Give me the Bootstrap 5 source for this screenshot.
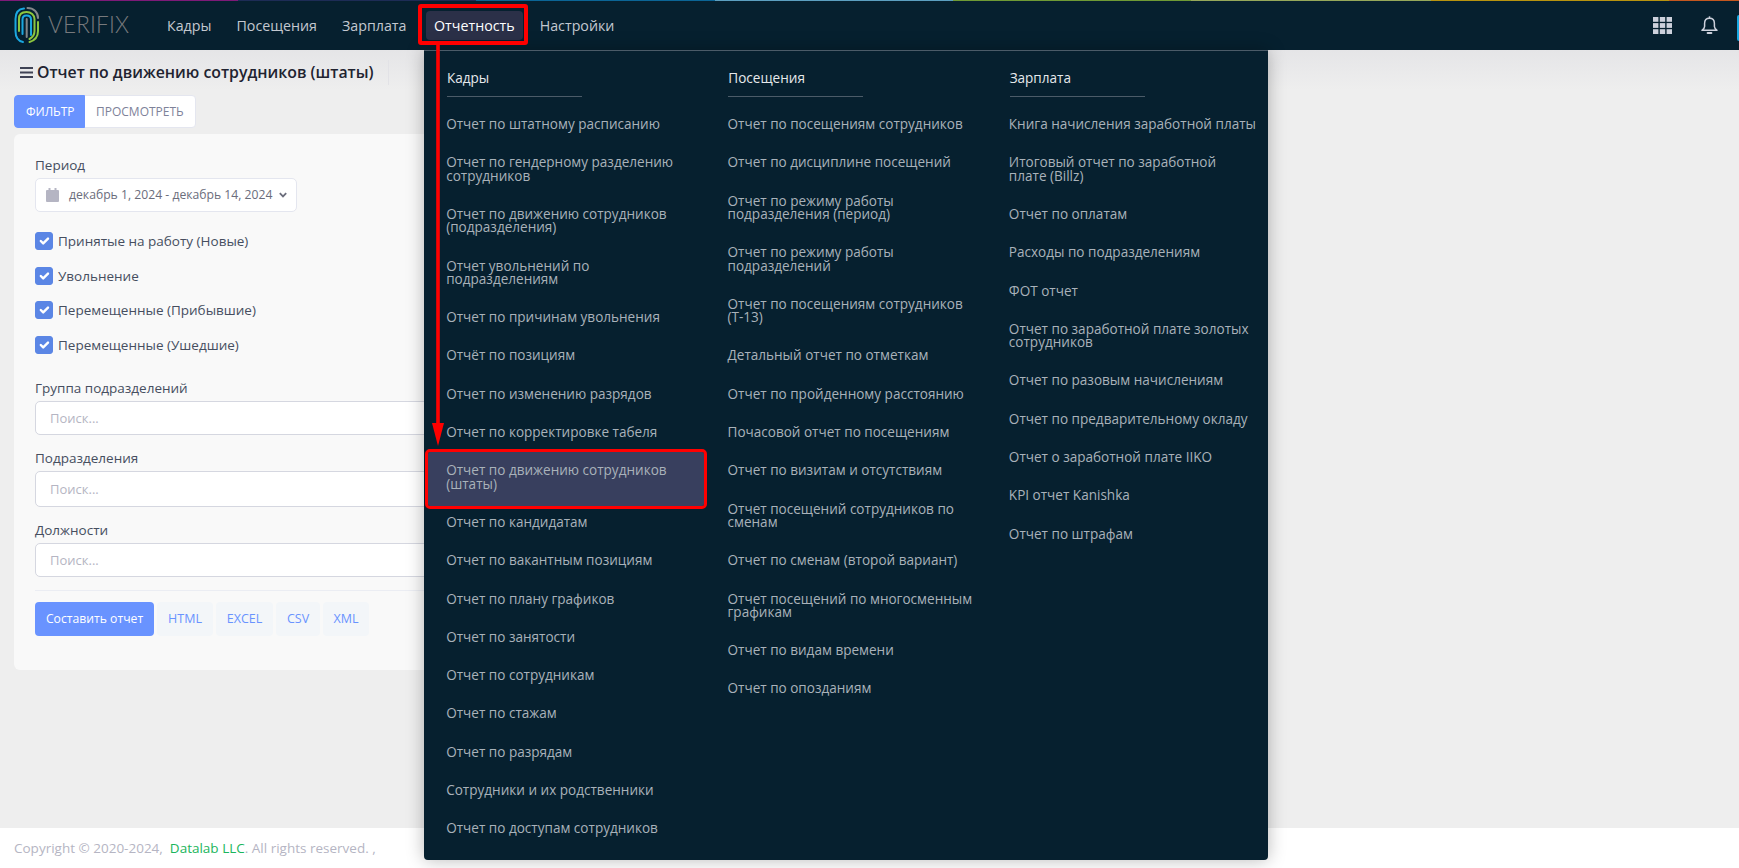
<!DOCTYPE html>
<html lang="ru">
  <head>
    <meta charset="UTF-8" />
    <meta name="viewport" content="width=device-width, initial-scale=1.0" />
    <title>Отчет по движению сотрудников (штаты)</title>
    <link href="https://cdn.jsdelivr.net/npm/bootstrap@5.3.0/dist/css/bootstrap.min.css" rel="stylesheet" />
    <style>
      body { font-family: "Open Sans", "Liberation Sans", sans-serif; font-size: 13.5px; background: #eeeeee; color: #3f4254; }
      .top-stripe { height: 1px; background: linear-gradient(90deg, #7d1a78 0 13.7%, #1d2c56 13.7% 27.4%, #0b6596 27.4% 41.1%, #5c9fc0 41.1% 54.8%, #6f9a35 54.8% 68.5%, #96a85a 68.5% 82.3%, #b8930f 82.3% 96%, #c4571f 96%); }
      .app-header { height: 50px; background: #06202f; }
      .logo-box { margin-left: 14px; width: 145px; }
      .logo-word { font-family: "Lato", sans-serif; font-weight: 300; font-size: 22.5px; color: #77797c; letter-spacing: .2px; margin-left: 8px; line-height: 1; }
      .app-header .nav-link { color: #c3c8d0; font-size: 14.25px; padding: 5px 9px; height: 29px; line-height: 19px; border-radius: 4px; margin-right: 9px; }
      .app-header .nav-link.active { color: #fff; background: #2b3048; font-weight: 500; margin-left: 2.5px; }
      .head-icons { gap: 29px; padding-right: 21px; }
      .avatar-edge { position: absolute; right: 0; top: 15px; width: 2px; height: 26px; background: #19a7e0; border-radius: 2px 0 0 2px; }
      .page-main { background: linear-gradient(#e5e5e7, #eeeeee 40px); padding: 0 14px; }
      .title-row { height: 45px; padding-left: 6px; }
      .title-text { font-size: 15.85px; font-weight: 600; color: #212330; padding-right: 14px; border-right: 1px solid #e2e2e6; line-height: 25px; }
      .tab-group .btn { font-size: 12px; height: 33px; padding: 0 11px; border-radius: 4px; text-transform: uppercase; border: 1px solid #e4e6ef; background: #fff; color: #7e8299; }
      .tab-group .btn.active { background: #6993ff; border-color: #6993ff; color: #fff; width: 71px; font-weight: 500; }
      .filter-card { width: 900px; height: 536px; margin-top: 6px; background: #f9f9f9; border: 0; border-radius: 6px; padding: 21px; }
      .field-label { font-size: 13.5px; line-height: 20px; margin-bottom: 3px; color: #464e5f; }
      .date-btn { width: 262px; height: 34px; background: #fff; border: 1px solid #e4e6ef; border-radius: 5px; padding: 0 10px; font-size: 12.2px; color: #6b6d7c; gap: 10px; }
      .date-caret { margin-left: -4px; }
      .check-list { margin-top: 20px; gap: 16.7px; margin-bottom: 24px; }
      .check-list .form-check { padding: 0; margin: 0; min-height: 18px; line-height: 18px; }
      .check-list .form-check-input { float: none; width: 18px; height: 18px; margin: 0 5px 0 0; border-radius: 3px; background-color: #5b86e5; border-color: #5b86e5; vertical-align: top; }
      .check-list .form-check-label { color: #464e5f; }
      .search-input { height: 34px; border: 1px solid #d5d7e0; border-radius: 5px; padding: 0 14px; font-size: 13px; margin-bottom: 13px; }
      .search-input.tall { height: 36px; }
      .search-input::placeholder { color: #b5b5c3; }
      .card-rule { margin: 13px 0 11px; border-top: 1px solid #ebedf3; opacity: 1; }
      .action-row { gap: 3px; }
      .action-row .btn { height: 34px; padding: 0; font-size: 12.5px; border: 0; border-radius: 4px; }
      .action-row .btn-make { width: 119px; background: #6993ff; color: #fff; font-size: 12.2px; }
      .btn-export { background: #f3f6f9; color: #6993ff; }
      .page-foot { height: 40px; flex: 0 0 40px; background: #fff; padding-left: 14px; color: #b5b5c3; font-size: 13.5px; line-height: 40px; }
      .page-foot a { color: #1bb55c; text-decoration: none; }
      .reports-menu { display: block; position: absolute; left: 424px; top: 50px; width: 844px; height: 810px; margin: 0; padding: 0; background: #06202f; border: 0; border-top: 1px solid #4b5b68; border-radius: 0 0 4px 4px; box-shadow: 0 0 18px rgba(0, 0, 0, .28); z-index: 20; }
      .menu-col { width: 281.33px; }
      .menu-head { margin: 0 0 8.6px 23px; padding-top: 18px; height: 46px; width: 135px; border-bottom: 1px solid #4b5b68; color: #e6e9ec; font-size: 13.55px; font-weight: 500; line-height: 18px; }
      .rep-item { display: block; margin: 0 1px 0 4px; padding: 12.5px 10.5px 12.5px 18.2px; color: #a9b2ba; font-size: 13.55px; line-height: 13.3px; text-decoration: none; border-radius: 2px; }
      .rep-item.picked { background: #383f5e; outline: 3.5px solid #f00; padding-bottom: 15px; margin-bottom: -2.5px; position: relative; z-index: 1; }
      .nav-mark { position: absolute; left: 418px; top: 4px; width: 110px; height: 41px; border: 4px solid #f00; border-radius: 3px; z-index: 30; }
      .nav-arrow { position: absolute; left: 430px; top: 45px; z-index: 30; }
    </style>
  </head>
  <body class="d-flex flex-column vh-100 overflow-hidden position-relative">
    <header class="app-header navbar navbar-expand p-0 position-relative flex-nowrap align-items-center">
      <div class="top-stripe position-absolute top-0 start-0 w-100"></div>
      <a class="logo-box d-flex align-items-center text-decoration-none" href="#">
        <svg class="flex-shrink-0" width="26" height="37" viewBox="0 0 26 37" fill="none" stroke-width="2" stroke-linecap="round">
          <path d="M10 1.5C4 2 1.5 6 1.5 12V24C1.5 30 4 34 9 35" stroke="#1aa7e0" />
          <path d="M13.5 1C19.5 1 24 5 24 11" stroke="#85878a" />
          <path d="M24 15V24C24 30 20.5 33.5 15.5 35" stroke="#8cc63f" />
          <path d="M5 24V12C5 7 8 5 12.5 5C17 5 20.5 8 20.5 12V24C20.5 28 18.5 30.5 15.5 32" stroke="#8cc63f" />
          <path d="M8.5 27V12.5C8.5 10 10 8.5 12.5 8.5C15 8.5 17 10 17 12.5V28" stroke="#1aa7e0" />
          <path d="M12.7 12V30" stroke="#85878a" />
        </svg>
        <span class="logo-word">VERIFIX</span>
      </a>
      <ul class="navbar-nav align-items-center">
        <li class="nav-item"><a class="nav-link" href="#">Кадры</a></li>
        <li class="nav-item"><a class="nav-link" href="#">Посещения</a></li>
        <li class="nav-item"><a class="nav-link" href="#">Зарплата</a></li>
        <li class="nav-item"><a class="nav-link active" href="#">Отчетность</a></li>
        <li class="nav-item"><a class="nav-link" href="#">Настройки</a></li>
      </ul>
      <div class="head-icons d-flex align-items-center ms-auto">
        <svg width="19" height="17" viewBox="0 0 19 17" fill="#cdd1dc">
          <rect x="0" y="0" width="5.4" height="4.8" /><rect x="6.8" y="0" width="5.4" height="4.8" /><rect x="13.6" y="0" width="5.4" height="4.8" />
          <rect x="0" y="6.1" width="5.4" height="4.8" /><rect x="6.8" y="6.1" width="5.4" height="4.8" /><rect x="13.6" y="6.1" width="5.4" height="4.8" />
          <rect x="0" y="12.2" width="5.4" height="4.8" /><rect x="6.8" y="12.2" width="5.4" height="4.8" /><rect x="13.6" y="12.2" width="5.4" height="4.8" />
        </svg>
        <svg width="17" height="19" viewBox="0 0 17 19" fill="none" stroke="#cdd1dc" stroke-width="1.5" stroke-linejoin="round">
          <path d="M8.5 2.2C5.4 2.2 3.6 4.4 3.6 7.3V10.5C3.6 12 2.6 13 1 14.3H16C14.4 13 13.4 12 13.4 10.5V7.3C13.4 4.4 11.6 2.2 8.5 2.2Z" />
          <path d="M8.5 .3V2" />
          <path d="M6.6 16.9H10.4" stroke-width="2" stroke-linecap="round" />
        </svg>
      </div>
      <span class="avatar-edge"></span>
    </header>

    <main class="page-main flex-grow-1">
      <div class="title-row d-flex align-items-center">
        <svg class="me-1 flex-shrink-0" width="13" height="11" viewBox="0 0 13 11" fill="#3f4254"><rect width="13" height="2" /><rect y="4.5" width="13" height="2" /><rect y="9" width="13" height="2" /></svg>
        <span class="title-text">Отчет по движению сотрудников (штаты)</span>
      </div>
      <div class="tab-group btn-group mt-0">
        <button class="btn active" type="button">Фильтр</button>
        <button class="btn" type="button">Просмотреть</button>
      </div>
      <form class="filter-card card">
        <label class="field-label">Период</label>
        <button class="date-btn d-flex align-items-center" type="button">
          <svg class="flex-shrink-0" width="13" height="14" viewBox="0 0 13 14" fill="#b5b5c3"><rect x="0" y="2" width="13" height="12" rx="1" /><rect x="2.5" y="0" width="2" height="3" /><rect x="8.5" y="0" width="2" height="3" /></svg>
          <span class="text-nowrap">декабрь 1, 2024 - декабрь 14, 2024</span>
          <svg class="date-caret flex-shrink-0" width="8" height="6" viewBox="0 0 8 6" fill="none" stroke="#6b6d7c" stroke-width="1.8"><path d="M.8 1.2 4 4.4 7.2 1.2" /></svg>
        </button>
        <div class="check-list d-flex flex-column">
          <div class="form-check"><input class="form-check-input" type="checkbox" id="chkNew" checked /><label class="form-check-label" for="chkNew">Принятые на работу (Новые)</label></div>
          <div class="form-check"><input class="form-check-input" type="checkbox" id="chkFired" checked /><label class="form-check-label" for="chkFired">Увольнение</label></div>
          <div class="form-check"><input class="form-check-input" type="checkbox" id="chkIn" checked /><label class="form-check-label" for="chkIn">Перемещенные (Прибывшие)</label></div>
          <div class="form-check"><input class="form-check-input" type="checkbox" id="chkOut" checked /><label class="form-check-label" for="chkOut">Перемещенные (Ушедшие)</label></div>
        </div>
        <label class="field-label">Группа подразделений</label>
        <input class="form-control search-input" placeholder="Поиск..." />
        <label class="field-label">Подразделения</label>
        <input class="form-control search-input tall" placeholder="Поиск..." />
        <label class="field-label">Должности</label>
        <input class="form-control search-input mb-0" placeholder="Поиск..." />
        <hr class="card-rule" />
        <div class="action-row d-flex">
          <button class="btn btn-make" type="button">Составить отчет</button>
          <button class="btn btn-export" style="width: 56px" type="button">HTML</button>
          <button class="btn btn-export" style="width: 57px" type="button">EXCEL</button>
          <button class="btn btn-export" style="width: 44px" type="button">CSV</button>
          <button class="btn btn-export" style="width: 46px" type="button">XML</button>
        </div>
      </form>
    </main>

    <footer class="page-foot">Copyright © 2020-2024, &nbsp;<a href="#">Datalab LLC</a>. All rights reserved. ,</footer>

    <div class="reports-menu dropdown-menu show" id="reportsMenu"></div>
    <div class="nav-mark"></div>
    <svg class="nav-arrow" width="16" height="402" viewBox="0 0 16 402" fill="#f00">
      <rect x="6.2" y="0" width="3.6" height="380" />
      <polygon points="2,378 14,378 8,401" />
    </svg>

    <script>
      const columns = [
        {
          title: "Кадры",
          items: [
            "Отчет по штатному расписанию",
            "Отчет по гендерному разделению сотрудников",
            "Отчет по движению сотрудников (подразделения)",
            "Отчет увольнений по подразделениям",
            "Отчет по причинам увольнения",
            "Отчёт по позициям",
            "Отчет по изменению разрядов",
            "Отчет по корректировке табеля",
            "Отчет по движению сотрудников (штаты)",
            "Отчет по кандидатам",
            "Отчет по вакантным позициям",
            "Отчет по плану графиков",
            "Отчет по занятости",
            "Отчет по сотрудникам",
            "Отчет по стажам",
            "Отчет по разрядам",
            "Сотрудники и их родственники",
            "Отчет по доступам сотрудников",
          ],
        },
        {
          title: "Посещения",
          items: [
            "Отчет по посещениям сотрудников",
            "Отчет по дисциплине посещений",
            "Отчет по режиму работы подразделения (период)",
            "Отчет по режиму работы подразделений",
            "Отчет по посещениям сотрудников (Т-13)",
            "Детальный отчет по отметкам",
            "Отчет по пройденному расстоянию",
            "Почасовой отчет по посещениям",
            "Отчет по визитам и отсутствиям",
            "Отчет посещений сотрудников по сменам",
            "Отчет по сменам (второй вариант)",
            "Отчет посещений по многосменным графикам",
            "Отчет по видам времени",
            "Отчет по опозданиям",
          ],
        },
        {
          title: "Зарплата",
          items: [
            "Книга начисления заработной платы",
            "Итоговый отчет по заработной плате (Billz)",
            "Отчет по оплатам",
            "Расходы по подразделениям",
            "ФОТ отчет",
            "Отчет по заработной плате золотых сотрудников",
            "Отчет по разовым начислениям",
            "Отчет по предварительному окладу",
            "Отчет о заработной плате IIKO",
            "KPI отчет Kanishka",
            "Отчет по штрафам",
          ],
        },
      ];

      // Build the three report columns
      const menu = document.getElementById("reportsMenu");
      const row = document.createElement("div");
      row.className = "d-flex";
      columns.forEach((column) => {
        const col = document.createElement("div");
        col.className = "menu-col";
        const head = document.createElement("div");
        head.className = "menu-head";
        head.textContent = column.title;
        col.appendChild(head);
        column.items.forEach((item) => {
          const link = document.createElement("a");
          link.className = "rep-item";
          link.href = "#";
          link.textContent = item;
          if (item === "Отчет по движению сотрудников (штаты)") link.classList.add("picked");
          col.appendChild(link);
        });
        row.appendChild(col);
      });
      menu.appendChild(row);
    </script>
    <script src="https://cdn.jsdelivr.net/npm/bootstrap@5.3.0/dist/js/bootstrap.bundle.min.js"></script>
  </body>
</html>
